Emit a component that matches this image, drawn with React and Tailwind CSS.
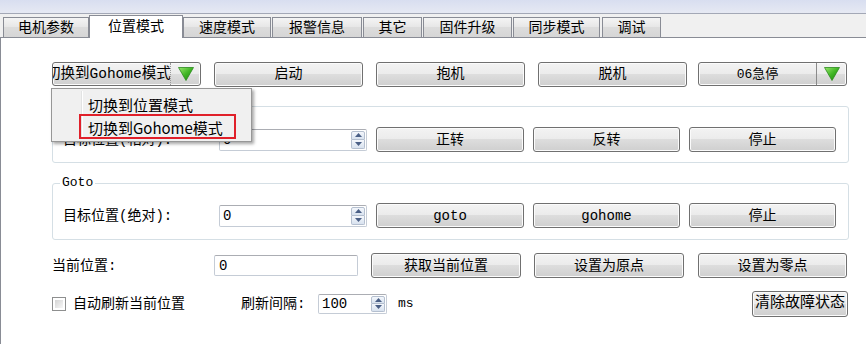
import React from 'react';

const tabs = [
  { label: '电机参数', w: 'w-[86px]', ml: 'ml-0' },
  { label: '位置模式', w: 'w-[94px]', ml: 'ml-0', active: true },
  { label: '速度模式', w: 'w-[88px]', ml: 'ml-0' },
  { label: '报警信息', w: 'w-[90px]', ml: 'ml-[1px]' },
  { label: '其它', w: 'w-[59px]', ml: 'ml-[1px]' },
  { label: '固件升级', w: 'w-[89px]', ml: 'ml-[1px]' },
  { label: '同步模式', w: 'w-[87px]', ml: 'ml-[1px]' },
  { label: '调试', w: 'w-[59px]', ml: 'ml-[2px]' },
];

const Btn = ({ className = '', children }) => (
  <div
    className={`flex items-center justify-center h-[25px] rounded-[3px] border border-[#707070] bg-[linear-gradient(#f3f3f3,#ebebeb_50%,#dddddd_50%,#cfcfcf)] shadow-[inset_0_0_0_1px_#fbfbfb] text-black ${className}`}
  >
    {children}
  </div>
);

const GreenArrow = () => (
  <svg width="16" height="14" viewBox="0 0 16 14">
    <defs>
      <linearGradient id="ga" x1="0" y1="0" x2="1" y2="1">
        <stop offset="0" stopColor="#9be86e" />
        <stop offset="0.5" stopColor="#3fb524" />
        <stop offset="1" stopColor="#1c7f10" />
      </linearGradient>
    </defs>
    <polygon points="0.5,0.5 15.5,0.5 8,13.5" fill="url(#ga)" stroke="#2a8a1c" strokeWidth="0.8" />
  </svg>
);

const SpinArrows = () => (
  <div className="flex flex-col w-[15px] h-full py-[1px] pr-[1px]">
    <div className="flex-1 flex items-center justify-center border border-[#b4bfcf] bg-[linear-gradient(#f4f7fc,#d8e2ef)] rounded-t-[2px]">
      <svg width="7" height="4" viewBox="0 0 7 4">
        <polygon points="0,4 7,4 3.5,0" fill="#4a5f86" />
      </svg>
    </div>
    <div className="flex-1 flex items-center justify-center border border-t-0 border-[#b4bfcf] bg-[linear-gradient(#f4f7fc,#d8e2ef)] rounded-b-[2px]">
      <svg width="7" height="4" viewBox="0 0 7 4">
        <polygon points="0,0 7,0 3.5,4" fill="#4a5f86" />
      </svg>
    </div>
  </div>
);

const SpinBox = ({ className = '', value }) => (
  <div className={`flex items-stretch bg-white border border-[#c5ccd6] border-t-[#abadb3] rounded-[2px] ${className}`}>
    <div className="flex-1 flex items-center pl-[3px] text-black">{value}</div>
    <SpinArrows />
  </div>
);

const GroupRow = ({ label, b1, b2, b3 }) => (
  <div className="flex items-center h-[25px] pl-[10px]">
    <div className="w-[156px] text-black">{label}</div>
    <SpinBox className="w-[148px] h-[22px]" value="0" />
    <Btn className="ml-[9px] w-[148px]">{b1}</Btn>
    <Btn className="ml-[9px] w-[147px]">{b2}</Btn>
    <Btn className="ml-[9px] w-[147px]">{b3}</Btn>
  </div>
);

export default function App() {
  return (
    <div className="relative w-[866px] h-[344px] overflow-hidden bg-[#f0f0f0] flex flex-col text-[14px] leading-none font-['Liberation_Mono','Noto_Sans_CJK_SC',monospace]">
      {/* window strip */}
      <div className="h-[13px] bg-[linear-gradient(#d8def0,#e6e9f3)]" />
      <div className="h-px bg-[#a3a8b6]" />

      {/* tabs */}
      <div className="h-[23px] flex items-end pl-[3px]">
        {tabs.map((t) =>
          t.active ? (
            <div
              key={t.label}
              className={`relative z-10 h-[23px] mb-[-1px] ${t.w} ${t.ml} flex items-center justify-center bg-white border border-b-0 border-[#898c95] text-black`}
            >
              {t.label}
            </div>
          ) : (
            <div
              key={t.label}
              className={`h-[20px] ${t.w} ${t.ml} flex items-center justify-center bg-[linear-gradient(#f4f4f4,#e6e6e6_50%,#dcdcdc_50%,#d6d6d6)] border border-b-0 border-[#898c95] text-black`}
            >
              {t.label}
            </div>
          )
        )}
      </div>

      {/* panel */}
      <div className="flex-1 bg-white border-t border-l border-[#898c95] pl-[51px] flex flex-col">
        {/* row 1 */}
        <div className="mt-[24px] flex items-center h-[24px]">
          <div className="w-[149px] h-[24px] flex rounded-[3px] border border-[#707070] bg-[linear-gradient(#f3f3f3,#ebebeb_50%,#dddddd_50%,#cfcfcf)] shadow-[inset_0_0_0_1px_#fbfbfb]">
            <div className="w-[118px] h-full overflow-hidden flex items-center border-r border-dotted border-[#9a9a9a]">
              <span className="ml-[-7px] whitespace-nowrap text-black text-[14.5px]">切换到Gohome模式</span>
            </div>
            <div className="flex-1 flex items-center justify-center">
              <GreenArrow />
            </div>
          </div>
          <Btn className="ml-[13px] w-[149px] h-[24px]">启动</Btn>
          <Btn className="ml-[13px] w-[149px] h-[24px]">抱机</Btn>
          <Btn className="ml-[13px] w-[149px] h-[24px]">脱机</Btn>
          <div className="ml-[11px] w-[149px] h-[24px] flex rounded-[3px] border border-[#707070] bg-[linear-gradient(#f3f3f3,#ebebeb_50%,#dddddd_50%,#cfcfcf)] shadow-[inset_0_0_0_1px_#fbfbfb]">
            <div className="w-[118px] flex items-center justify-center border-r border-[#8a8a8a] text-black text-[13px]">
              06急停
            </div>
            <div className="flex-1 flex items-center justify-center">
              <GreenArrow />
            </div>
          </div>
        </div>

        {/* group 1 */}
        <div className="mt-[20px] w-[797px] h-[57px] border border-[#d5dfe5] rounded-[3px] pt-[20px]">
          <GroupRow label="目标位置(相对):" b1="正转" b2="反转" b3="停止" />
        </div>

        {/* goto group */}
        <div className="relative mt-[20px] w-[797px] h-[57px] border border-[#d5dfe5] rounded-[3px] pt-[19px]">
          <div className="absolute top-[-8px] left-[7px] bg-white px-[2px] text-[13px] text-black">Goto</div>
          <GroupRow label="目标位置(绝对):" b1="goto" b2="gohome" b3="停止" />
        </div>

        {/* current position */}
        <div className="mt-[13px] flex items-center h-[25px]">
          <div className="w-[162px] text-black">当前位置:</div>
          <div className="w-[144px] h-[21px] flex items-center pl-[4px] bg-white border border-[#c5ccd6] border-t-[#abadb3] rounded-[2px] text-black">
            0
          </div>
          <Btn className="ml-[13px] w-[150px]">获取当前位置</Btn>
          <Btn className="ml-[13px] w-[150px]">设置为原点</Btn>
          <Btn className="ml-[14px] w-[149px]">设置为零点</Btn>
        </div>

        {/* auto refresh */}
        <div className="mt-[13px] flex items-center h-[25px] w-[796px]">
          <div className="w-[189px] flex items-center">
            <div className="w-[14px] h-[14px] border border-[#8e8f8f] p-[2px] bg-white">
              <div className="w-full h-full bg-[linear-gradient(135deg,#d4d4d4,#f7f7f7)]" />
            </div>
            <span className="ml-[7px] text-black">自动刷新当前位置</span>
          </div>
          <div className="w-[77px] text-black">刷新间隔:</div>
          <SpinBox className="w-[69px] h-[20px]" value="100" />
          <span className="ml-[11px] text-black text-[13px]">ms</span>
          <Btn className="ml-auto w-[96px] h-[26px] text-[15px]">清除故障状态</Btn>
        </div>
      </div>

      {/* dropdown menu */}
      <div className="absolute left-[51px] top-[88px] w-[201px] h-[54px] bg-[#f0f0f0] border border-[#979797] shadow-[2px_2px_3px_rgba(0,0,0,0.35)] font-['Noto_Sans_CJK_SC',sans-serif] text-[15px] text-black">
        <div className="absolute left-[29px] top-[2px] bottom-[2px] w-[2px] border-l border-[#e2e3e3] bg-white" />
        <div className="absolute left-[36px] top-[8px]">切换到位置模式</div>
        <div className="absolute left-[27px] top-[25px] w-[157px] h-[25px] border-2 border-[#e0202a]" />
        <div className="absolute left-[36px] top-[31px]">切换到Gohome模式</div>
      </div>
    </div>
  );
}
